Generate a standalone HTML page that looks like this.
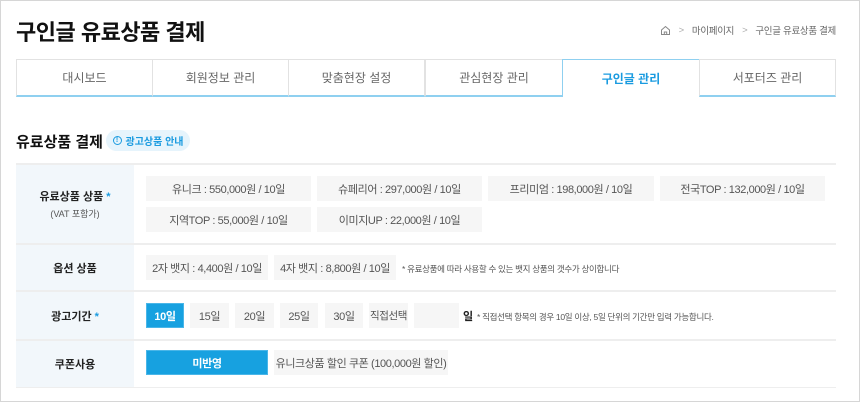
<!DOCTYPE html>
<html><head><meta charset="utf-8"><style>
*{margin:0;padding:0;box-sizing:border-box}
body{width:860px;height:403px;background:#fff;font-family:"Liberation Sans","Noto Sans CJK KR",sans-serif;position:relative;overflow:hidden;color:#222;white-space:nowrap}
.frame{position:absolute;left:0;top:0;width:860px;height:402px;border:1px solid #d6d6d6}
.a{position:absolute}
.title{left:16px;top:15px;font-size:22px;font-weight:bold;color:#111;letter-spacing:-0.5px}
.bc{position:absolute;right:24px;top:23px;font-size:9.5px;color:#666;display:flex;align-items:center;letter-spacing:-0.3px}
.bc .g{color:#aaa;margin:0 8px}
.tab{position:absolute;top:59px;height:38px;border:1px solid #e2e2e2;border-bottom:2px solid #8fd0f0;font-size:12px;color:#666;display:flex;align-items:center;justify-content:center}
.tab.on{border:1px solid #8fd0f0;border-bottom:none;color:#1a9be0;font-weight:bold;background:#fff}
.h2{left:16px;top:131px;font-size:15px;font-weight:bold;color:#111}
.badge{left:106px;top:130px;width:84px;height:21px;border-radius:11px;background:#e6f4fc;color:#1a9be0;font-size:10px;font-weight:bold;display:flex;align-items:center;justify-content:center}
.lbl{position:absolute;left:16px;width:118px;background:#f2f7fb;font-size:11px;font-weight:bold;color:#222;display:flex;flex-direction:column;align-items:center;justify-content:center}
.line{position:absolute;left:16px;width:820px;height:2px;background:#eeeeee}
.b{position:absolute;height:25px;background:#f6f6f6;font-size:11px;color:#555;display:flex;align-items:center;justify-content:center;letter-spacing:-0.4px}
.blue{background:#17a1e0;color:#fff;font-weight:bold;border:1px solid #4ab6e8}
.note{position:absolute;font-size:8.5px;color:#555;letter-spacing:-0.3px}
.st{color:#1a9be0}
</style></head><body>
<div class="frame"></div>
<div class="a title">구인글 유료상품 결제</div>
<div class="bc">
<svg width="11" height="11" viewBox="0 0 11 11"><path d="M1.5 5 L5.5 1.5 L9.5 5 V9.5 H1.5 Z M4.3 9.5 V7 H6.7 V9.5" fill="none" stroke="#888" stroke-width="1"/></svg>
<span class="g">&gt;</span><span>마이페이지</span><span class="g">&gt;</span><span>구인글 유료상품 결제</span></div>

<div class="tab" style="left:16px;width:137px">대시보드</div>
<div class="tab" style="left:152px;width:137px">회원정보 관리</div>
<div class="tab" style="left:288px;width:137px">맞춤현장 설정</div>
<div class="tab" style="left:425px;width:138px">관심현장 관리</div>
<div class="tab on" style="left:562px;width:138px">구인글 관리</div>
<div class="tab" style="left:699px;width:137px">서포터즈 관리</div>

<div class="a h2">유료상품 결제</div>
<div class="a badge"><span style="display:inline-block;width:9px;height:9px;border:1px solid #1a9be0;border-radius:50%;font-size:7px;line-height:7px;text-align:center;margin-right:4px">!</span>광고상품 안내</div>

<div class="line" style="top:163px"></div>
<div class="lbl" style="top:165px;height:78px"><span>유료상품 상품 <span class="st">*</span></span><span style="font-weight:normal;font-size:9px;color:#555;margin-top:3px">(VAT 포함가)</span></div>
<div class="b" style="left:146px;top:176px;width:165px">유니크 : 550,000원 / 10일</div>
<div class="b" style="left:317px;top:176px;width:165px">슈페리어 : 297,000원 / 10일</div>
<div class="b" style="left:488px;top:176px;width:166px">프리미엄 : 198,000원 / 10일</div>
<div class="b" style="left:660px;top:176px;width:165px">전국TOP : 132,000원 / 10일</div>
<div class="b" style="left:146px;top:207px;width:165px">지역TOP : 55,000원 / 10일</div>
<div class="b" style="left:317px;top:207px;width:165px">이미지UP : 22,000원 / 10일</div>

<div class="line" style="top:243px"></div>
<div class="lbl" style="top:245px;height:45px">옵션 상품</div>
<div class="b" style="left:146px;top:255px;width:122px">2자 뱃지 : 4,400원 / 10일</div>
<div class="b" style="left:274px;top:255px;width:122px">4자 뱃지 : 8,800원 / 10일</div>
<div class="note" style="left:402px;top:263px">* 유료상품에 따라 사용할 수 있는 뱃지 상품의 갯수가 상이합니다</div>

<div class="line" style="top:290px"></div>
<div class="lbl" style="top:292px;height:47px"><span>광고기간 <span class="st">*</span></span></div>
<div class="b blue" style="left:146px;top:303px;width:38px">10일</div>
<div class="b" style="left:190px;top:303px;width:39px">15일</div>
<div class="b" style="left:235px;top:303px;width:39px">20일</div>
<div class="b" style="left:280px;top:303px;width:38px">25일</div>
<div class="b" style="left:325px;top:303px;width:38px">30일</div>
<div class="b" style="left:369px;top:303px;width:39px;font-size:10.5px">직접선택</div>
<div class="b" style="left:414px;top:303px;width:45px"></div>
<div class="a" style="left:463px;top:308px;font-size:11px;font-weight:bold">일</div>
<div class="note" style="left:477px;top:311px">* 직접선택 항목의 경우 10일 이상, 5일 단위의 기간만 입력 가능합니다.</div>

<div class="line" style="top:339px"></div>
<div class="lbl" style="top:341px;height:46px">쿠폰사용</div>
<div class="b blue" style="left:146px;top:350px;width:122px">미반영</div>
<div class="b" style="left:274px;top:350px;width:174px">유니크상품 할인 쿠폰 (100,000원 할인)</div>
<div class="line" style="top:387px;height:1px"></div>
</body></html>
